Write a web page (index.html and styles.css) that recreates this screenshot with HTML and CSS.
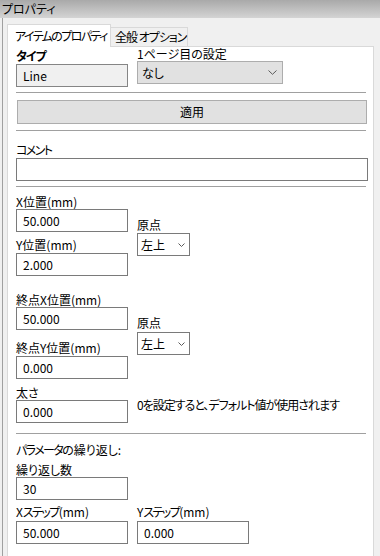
FILE: index.html
```html
<!DOCTYPE html>
<html lang="ja">
<head>
<meta charset="utf-8">
<link rel="stylesheet" href="styles.css">
</head>
<body>
<div class="titlebar">プロパティ</div>
<div class="frame">
  <div class="tabs">
    <div class="tab active">アイテムのプロパティ</div>
    <div class="tab">全般 オプション</div>
  </div>
  <div class="panel">
    <div class="row row1">
      <div class="col col-type">
        <div class="label bold"><span class="kn">タイプ</span></div>
        <div class="field readonly">Line</div>
      </div>
      <div class="col col-page">
        <div class="label">1ページ目の設定</div>
        <div class="select wide">
          <span>なし</span>
          <svg class="chev" width="9" height="5" viewBox="0 0 9 5"><polyline points="0.5,0.5 4.5,4.3 8.5,0.5" fill="none" stroke="#5a5a5a" stroke-width="1"/></svg>
        </div>
      </div>
    </div>
    <div class="sep sep-a"></div>
    <div class="button">適用</div>
    <div class="sep sep-b"></div>
    <div class="label comment-label"><span class="kn">コメント</span></div>
    <div class="field comment"></div>
    <div class="sep sep-c"></div>

    <div class="row group1">
      <div class="col">
        <div class="label">X位置(mm)</div>
        <div class="field">50.000</div>
        <div class="label gap6">Y位置(mm)</div>
        <div class="field mt1">2.000</div>
      </div>
      <div class="col origin1">
        <div class="label">原点</div>
        <div class="select small mt1">
          <span>左上</span>
          <svg class="chev" width="7" height="4" viewBox="0 0 7 4"><polyline points="0.5,0.5 3.5,3.5 6.5,0.5" fill="none" stroke="#5a5a5a" stroke-width="1"/></svg>
        </div>
      </div>
    </div>

    <div class="row group2">
      <div class="col">
        <div class="label">終点X位置(mm)</div>
        <div class="field">50.000</div>
        <div class="label gap11">終点Y位置(mm)</div>
        <div class="field mt1">0.000</div>
      </div>
      <div class="col origin2">
        <div class="label">原点</div>
        <div class="select small mt2">
          <span>左上</span>
          <svg class="chev" width="7" height="4" viewBox="0 0 7 4"><polyline points="0.5,0.5 3.5,3.5 6.5,0.5" fill="none" stroke="#5a5a5a" stroke-width="1"/></svg>
        </div>
      </div>
    </div>

    <div class="row group3">
      <div class="col">
        <div class="label">太さ</div>
        <div class="field">0.000</div>
      </div>
      <div class="col note">0を設定すると、デフォルト値が使用されます</div>
    </div>
    <div class="sep sep-d"></div>

    <div class="label repeat-title"><span class="kn">パラメータ</span>の繰り返し:</div>
    <div class="label repeat-count">繰り返し数</div>
    <div class="field">30</div>
    <div class="row group4">
      <div class="col">
        <div class="label">X<span class="kn">ステップ</span>(mm)</div>
        <div class="field mt2">50.000</div>
      </div>
      <div class="col">
        <div class="label">Y<span class="kn">ステップ</span>(mm)</div>
        <div class="field mt2">0.000</div>
      </div>
    </div>
  </div>
</div>
</body>
</html>
```

FILE: styles.css
```css
html, body {
  margin: 0;
  padding: 0;
  height: 556px;
  overflow: hidden;
}
body {
  background: #f0f0f0;
  font-family: "Noto Sans CJK JP", "Noto Sans", sans-serif;
  font-size: 12px;
  font-feature-settings: "palt" 1;
  color: #000;
  line-height: 14px;
}
.titlebar {
  height: 16px;
  padding: 2px 0 0 2px;
  background: linear-gradient(#a9a9a9, #d4d4d4);
  line-height: 14px;
}
.frame {
  margin-left: 2px;
  border-left: 1px solid #a0a0a0;
  height: 538px;
  padding-top: 6px;
  box-sizing: border-box;
}
.tabs {
  display: flex;
  align-items: flex-end;
  margin-left: 4px;
  height: 22px;
}
.tab {
  box-sizing: border-box;
  flex: none;
  height: 19px;
  width: 77px;
  border: 1px solid #d9d9d9;
  border-left: none;
  border-bottom: none;
  background: #f0f0f0;
  padding: 2px 0 0 4px;
  line-height: 14px;
  letter-spacing: -1px;
  white-space: nowrap;
}
.tab.active {
  width: 104px;
  height: 23px;
  margin-bottom: -1px;
  border-left: 1px solid #d9d9d9;
  background: #fff;
  padding: 4px 0 0 7px;
  letter-spacing: -1.6px;
  position: relative;
  z-index: 1;
}
.panel {
  margin-left: 4px;
  width: 367px;
  box-sizing: border-box;
  height: 510px;
  border: 1px solid #d9d9d9;
  border-bottom: none;
  background: #fff;
  padding: 0 5px 0 8px;
}
.row {
  display: flex;
  align-items: flex-start;
  gap: 9px;
}
.col {
  display: flex;
  flex-direction: column;
}
.label {
  height: 14px;
  line-height: 14px;
  white-space: nowrap;
}
.kn { letter-spacing: -1.6px; }
.bold { font-weight: bold; }
.bold .kn { letter-spacing: -1px; }
.field {
  box-sizing: border-box;
  width: 112px;
  height: 23px;
  border: 1px solid #7a7a7a;
  background: #fff;
  padding-left: 6px;
  display: flex;
  align-items: center;
  line-height: 14px;
}
.field.readonly {
  background: #f0f0f0;
  border-color: #858585;
}
.select {
  box-sizing: border-box;
  height: 23px;
  display: flex;
  align-items: center;
  justify-content: space-between;
  border: 1px solid #7a7a7a;
  background: #fff;
}
.select.wide {
  width: 146px;
  background: #e1e1e1;
  border-color: #adadad;
  padding: 0 5px 0 4px;
}
.select.small {
  width: 53px;
  padding: 0 4px 0 3px;
}
.chev { display: block; }
.mt1 { margin-top: 1px; }
.mt2 { margin-top: 2px; }
.gap6 { margin-top: 6px; }
.gap11 { margin-top: 11px; }

.row1 { margin-top: 0; }
.col-type { margin-top: 2px; }
.col-type .field { margin-top: 1px; }
.col-page { margin-top: 0; }

.sep {
  height: 1px;
  background: #a0a0a0;
  width: 350px;
}
.sep-a { margin-top: 5px; }
.button {
  box-sizing: border-box;
  margin: 7px 0 0 1px;
  width: 350px;
  height: 24px;
  border: 1px solid #adadad;
  background: #e1e1e1;
  display: flex;
  align-items: center;
  justify-content: center;
}
.sep-b { margin-top: 6px; }
.comment-label { margin-top: 12px; }
.field.comment {
  width: 352px;
  margin-top: 1px;
}
.sep-c { margin-top: 5px; }

.group1 { margin-top: 8px; }
.origin1 { margin-top: 23px; }
.group2 { margin-top: 17px; }
.origin2 { margin-top: 23px; }
.group3 { margin-top: 7px; }
.note {
  margin-top: 12px;
  white-space: nowrap;
  letter-spacing: -1px;
}
.sep-d { margin-top: 10px; }
.repeat-title { margin-top: 9px; }
.repeat-count { margin-top: 6px; }
.group4 { margin-top: 5px; }
```
